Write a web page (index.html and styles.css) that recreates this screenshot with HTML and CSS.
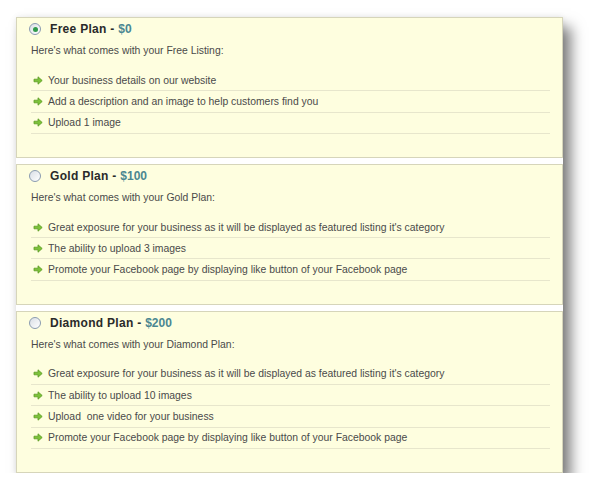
FILE: index.html
```html
<!DOCTYPE html>
<html>
<head>
<meta charset="utf-8">
<link rel="stylesheet" href="styles.css">
</head>
<body>
<div class="plans">
  <section class="plan">
    <div class="plan-title"><span class="radio checked"></span><span class="name">Free Plan - </span><span class="price">$0</span></div>
    <p class="intro">Here's what comes with your Free Listing:</p>
    <ul class="features">
      <li><svg class="arrow" viewBox="0 0 10 9"><path d="M1 3.2h4V0.8l4.2 3.7L5 8.2V5.8H1z"/></svg>Your business details on our website</li>
      <li><svg class="arrow" viewBox="0 0 10 9"><path d="M1 3.2h4V0.8l4.2 3.7L5 8.2V5.8H1z"/></svg>Add a description and an image to help customers find you</li>
      <li><svg class="arrow" viewBox="0 0 10 9"><path d="M1 3.2h4V0.8l4.2 3.7L5 8.2V5.8H1z"/></svg>Upload 1 image</li>
    </ul>
  </section>
  <section class="plan">
    <div class="plan-title"><span class="radio"></span><span class="name">Gold Plan - </span><span class="price">$100</span></div>
    <p class="intro">Here's what comes with your Gold Plan:</p>
    <ul class="features">
      <li><svg class="arrow" viewBox="0 0 10 9"><path d="M1 3.2h4V0.8l4.2 3.7L5 8.2V5.8H1z"/></svg>Great exposure for your business as it will be displayed as featured listing it's category</li>
      <li><svg class="arrow" viewBox="0 0 10 9"><path d="M1 3.2h4V0.8l4.2 3.7L5 8.2V5.8H1z"/></svg>The ability to upload 3 images</li>
      <li><svg class="arrow" viewBox="0 0 10 9"><path d="M1 3.2h4V0.8l4.2 3.7L5 8.2V5.8H1z"/></svg>Promote your Facebook page by displaying like button of your Facebook page</li>
    </ul>
  </section>
  <section class="plan">
    <div class="plan-title"><span class="radio"></span><span class="name">Diamond Plan - </span><span class="price">$200</span></div>
    <p class="intro">Here's what comes with your Diamond Plan:</p>
    <ul class="features">
      <li><svg class="arrow" viewBox="0 0 10 9"><path d="M1 3.2h4V0.8l4.2 3.7L5 8.2V5.8H1z"/></svg>Great exposure for your business as it will be displayed as featured listing it's category</li>
      <li><svg class="arrow" viewBox="0 0 10 9"><path d="M1 3.2h4V0.8l4.2 3.7L5 8.2V5.8H1z"/></svg>The ability to upload 10 images</li>
      <li><svg class="arrow" viewBox="0 0 10 9"><path d="M1 3.2h4V0.8l4.2 3.7L5 8.2V5.8H1z"/></svg>Upload &nbsp;one video for your business</li>
      <li><svg class="arrow" viewBox="0 0 10 9"><path d="M1 3.2h4V0.8l4.2 3.7L5 8.2V5.8H1z"/></svg>Promote your Facebook page by displaying like button of your Facebook page</li>
    </ul>
  </section>
</div>
</body>
</html>
```
FILE: styles.css
```css
html, body {
  margin: 0;
  padding: 0;
  background: #ffffff;
}
body {
  padding: 17px 0 0 16px;
  font-family: "Liberation Sans", Arial, sans-serif;
  color: #4a4a4a;
}
.plans {
  width: 547px;
  background: #ffffff;
  display: flex;
  flex-direction: column;
  gap: 6px;
  box-shadow: 8px 10px 13px rgba(0, 0, 0, 0.5), 0 0 6px rgba(0, 0, 0, 0.08);
}
.plan {
  background: #fefedf;
  border: 1px solid #d6d5ba;
  padding: 3px 12px 23px 14px;
}
.plan-title {
  display: flex;
  align-items: center;
  height: 16px;
  margin-left: -2px;
  font-size: 12px;
  font-weight: bold;
}
.radio {
  width: 10px;
  height: 10px;
  border-radius: 50%;
  border: 1px solid #8a9bb0;
  background: linear-gradient(135deg, #d9dee5, #ffffff);
  margin-right: 9px;
  position: relative;
  flex: none;
}
.radio.checked::after {
  content: "";
  position: absolute;
  left: 2.5px;
  top: 2.5px;
  width: 5px;
  height: 5px;
  border-radius: 50%;
  background: #2f9a4a;
}
.name {
  color: #2a2a2a;
  white-space: pre;
  letter-spacing: 0.3px;
}
.price {
  color: #4b8791;
}
.intro {
  margin: 6px 0 0 0;
  font-size: 10.4px;
  line-height: 15px;
}
.features {
  list-style: none;
  margin: 12px 0 0 0;
  padding: 0;
}
.features li {
  display: flex;
  align-items: center;
  height: 20.3px;
  border-bottom: 1px solid #e7e6cc;
  font-size: 10.4px;
  padding-left: 2px;
}
.arrow {
  width: 10px;
  height: 9px;
  margin-right: 5px;
  flex: none;
  fill: #7cc23a;
  stroke: #5c9a22;
  stroke-width: 0.8;
}
```
